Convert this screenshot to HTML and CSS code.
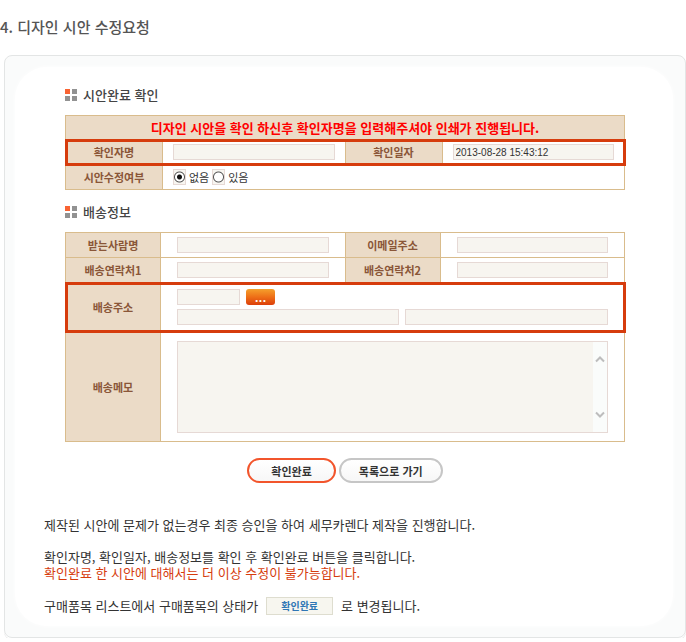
FILE: index.html
```html
<!DOCTYPE html>
<html lang="ko">
<head>
<meta charset="utf-8">
<title>디자인 시안 수정요청</title>
<link rel="stylesheet" href="styles.css">
</head>
<body>
<h1 class="page-title">4. 디자인 시안 수정요청</h1>
<main class="panel">
  <div class="panel-body">
    <form class="form">
      <h2 class="section-title">
        <svg class="bullet" viewBox="0 0 12 12" aria-hidden="true"><path fill="#f96332" d="M0 0h5v5H0z"/><path fill="#929292" d="M7 0h5v5H7zM0 7h5v5H0zM7 7h5v5H7z"/></svg>
        시안완료 확인
      </h2>
      <table class="grid confirm">
        <colgroup><col class="label-col"><col><col class="label-col"><col></colgroup>
        <tr class="row-notice"><th colspan="4" class="notice">디자인 시안을 확인 하신후 확인자명을 입력해주셔야 인쇄가 진행됩니다.</th></tr>
        <tr class="row highlight">
          <th><label for="checker">확인자명</label></th>
          <td><input class="field" id="checker" type="text"></td>
          <th><label for="checked-at">확인일자</label></th>
          <td><input class="field" id="checked-at" type="text" value="2013-08-28 15:43:12"></td>
        </tr>
        <tr class="row">
          <th>시안수정여부</th>
          <td colspan="3">
            <div class="choices">
              <input class="radio" type="radio" name="revise" id="revise-no" checked><label for="revise-no">없음</label>
              <input class="radio" type="radio" name="revise" id="revise-yes"><label for="revise-yes">있음</label>
            </div>
          </td>
        </tr>
      </table>

      <h2 class="section-title">
        <svg class="bullet" viewBox="0 0 12 12" aria-hidden="true"><path fill="#f96332" d="M0 0h5v5H0z"/><path fill="#929292" d="M7 0h5v5H7zM0 7h5v5H0zM7 7h5v5H7z"/></svg>
        배송정보
      </h2>
      <table class="grid delivery">
        <colgroup><col class="label-col"><col><col class="label-col"><col></colgroup>
        <tr class="row">
          <th><label for="receiver">받는사람명</label></th>
          <td><input class="field" id="receiver" type="text"></td>
          <th><label for="email">이메일주소</label></th>
          <td><input class="field" id="email" type="text"></td>
        </tr>
        <tr class="row">
          <th><label for="phone1">배송연락처1</label></th>
          <td><input class="field" id="phone1" type="text"></td>
          <th><label for="phone2">배송연락처2</label></th>
          <td><input class="field" id="phone2" type="text"></td>
        </tr>
        <tr class="row-address highlight">
          <th><label for="zip">배송주소</label></th>
          <td colspan="3">
            <div class="address">
              <div class="address-line">
                <input class="field zip" id="zip" type="text">
                <button class="search" type="button">...</button>
              </div>
              <div class="address-line">
                <input class="field street" type="text" aria-label="주소">
                <input class="field detail" type="text" aria-label="상세주소">
              </div>
            </div>
          </td>
        </tr>
        <tr class="row-memo">
          <th><label for="memo">배송메모</label></th>
          <td colspan="3">
            <div class="memo">
              <textarea class="field memo-text" id="memo"></textarea>
              <div class="scroll" aria-hidden="true">
                <svg viewBox="0 0 10 8"><path d="M1 6.5 5 2.5 9 6.5"/></svg>
                <svg viewBox="0 0 10 8"><path d="M1 1.5 5 5.5 9 1.5"/></svg>
              </div>
            </div>
          </td>
        </tr>
      </table>

      <div class="actions">
        <button class="pill primary" type="button">확인완료</button>
        <button class="pill back" type="button">목록으로 가기</button>
      </div>
    </form>

    <div class="guide">
      <p>제작된 시안에 문제가 없는경우 최종 승인을 하여 세무카렌다 제작을 진행합니다.</p>
      <p>확인자명, 확인일자, 배송정보를 확인 후 확인완료 버튼을 클릭합니다.<br><span class="warn">확인완료 한 시안에 대해서는 더 이상 수정이 불가능합니다.</span></p>
      <p class="status-line"><span>구매품목 리스트에서 구매품목의 상태가</span><span class="status">확인완료</span><span>로 변경됩니다.</span></p>
    </div>
  </div>
</main>
</body>
</html>
```
FILE: styles.css
```css
* { box-sizing: border-box; }

body {
  margin: 0;
  background: #fff;
  color: #333;
  font: 13px/16px "Noto Sans CJK KR", sans-serif;
}

h1, h2, p { margin: 0; }

input, button, textarea { font-family: inherit; margin: 0; }

.page-title {
  padding: 15px 0 16px;
  color: #555;
  font-size: 15px;
  font-weight: 500;
  line-height: 24px;
}

/* Panel frame */
.panel {
  margin-left: 4px;
  padding: 11px 12px 11px 10px;
  border: 1px solid #e3e5e5;
  border-radius: 8px;
  background: #fafbfb;
  box-shadow: 0 1px 0 #fff, 0 2px 0 #e9e9e9;
}

.panel-body {
  padding: 18px 27px 11px 29px;
  border-radius: 32px;
  background: #fff;
  box-shadow: 0 0 4px #fff;
}

.form { margin: 0 21px; }

.section-title {
  display: flex;
  align-items: center;
  gap: 6px;
  margin-bottom: 10px;
  color: #444;
  font-size: 13px;
  font-weight: 500;
  line-height: 20px;
}

.bullet { width: 12px; height: 12px; }

/* Form tables */
.grid {
  width: 100%;
  border-collapse: collapse;
  table-layout: fixed;
}

.grid + .section-title { margin-top: 12px; }

.confirm .label-col { width: 97px; }
.delivery .label-col { width: 95px; }

.grid th,
.grid td {
  padding: 0;
  border: 1px solid #d9bc8c;
}

.grid th {
  background: #ebdbc7;
  color: #8a5638;
  font-size: 11px;
  font-weight: 700;
  line-height: 16px;
}

.confirm td { padding: 0 10px; }
.delivery td { padding: 0 16px; }

.grid .notice {
  color: #f00;
  font-size: 13px;
}

.row-notice { height: 24px; }
.row { height: 25px; }
.row-address { height: 49px; }
.row-memo { height: 110px; }

.highlight {
  outline: 3px solid #d63c0d;
  outline-offset: -2px;
}

.field {
  display: block;
  width: 100%;
  height: 16px;
  padding: 0 2px;
  border: 1px solid #e6d9d5;
  border-radius: 0;
  background: #f7f5f0;
  color: #333;
  font-size: 10px;
  line-height: 14px;
}

.confirm .field { font-family: "Liberation Sans", sans-serif; }

.choices {
  display: flex;
  align-items: center;
  gap: 3px;
  font-size: 11px;
}

.radio {
  width: 13px;
  height: 16px;
  border: 1px solid #e6d9d5;
  appearance: none;
  background: radial-gradient(circle, #fff 0 4px, #555 5px 5px, #f7f5f0 6px);
}

.radio:checked {
  background: radial-gradient(circle, #111 0 2px, #fff 3px 4px, #555 5px 5px, #f7f5f0 6px);
}

.address {
  display: flex;
  flex-direction: column;
  gap: 4px;
}

.address-line {
  display: flex;
  gap: 6px;
}

.zip { width: 63px; }
.street { flex: 222; }
.detail { flex: 203; }

.search {
  width: 29px;
  height: 16px;
  padding: 0;
  border: 0;
  border-radius: 3px;
  background: linear-gradient(#f5a02c, #ee6f17 50%, #dc3f0b);
  color: #fff;
  font-size: 13px;
  font-weight: 500;
  line-height: 12px;
}

.memo { position: relative; }

.memo-text {
  height: 92px;
  resize: none;
}

.scroll {
  position: absolute;
  inset: 1px 1px 1px auto;
  display: flex;
  flex-direction: column;
  justify-content: space-between;
  width: 14px;
  padding: 13px 2px;
  background: #fafcfb;
}

.scroll svg {
  width: 10px;
  height: 8px;
  fill: none;
  stroke: #bdbdbd;
  stroke-width: 2;
}

/* Buttons */
.actions {
  display: flex;
  justify-content: center;
  gap: 3px;
  margin-top: 16px;
}

.pill {
  height: 25px;
  padding: 0 22px;
  border: 2px solid #c6c6c6;
  border-radius: 13px;
  background: linear-gradient(#fff, #f7f7f7);
  color: #333;
  font-size: 11px;
  font-weight: 700;
  line-height: 20px;
}

.primary { border-color: #f2552c; }
.back { padding: 0 18px; }

/* Guide text */
.guide {
  display: flex;
  flex-direction: column;
  gap: 16px;
  margin-top: 34px;
}

.warn { color: #d63c0d; }

.status-line {
  display: flex;
  align-items: center;
  gap: 8px;
}

.status {
  padding: 0 14px;
  border: 1px solid #deddcf;
  background: #f7f6ef;
  color: #2f76b5;
  font-size: 10px;
  font-weight: 700;
}
```
